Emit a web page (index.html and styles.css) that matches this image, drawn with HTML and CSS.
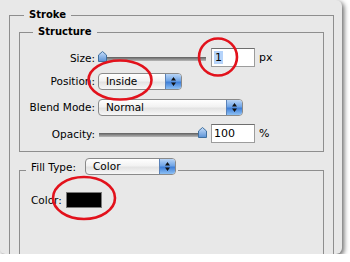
FILE: index.html
```html
<!DOCTYPE html>
<html lang="en">
<head>
    <meta charset="UTF-8">
    <title>Stroke</title>
    <link rel="stylesheet" href="styles.css">
</head>
<body>
    <div class="panel">
        <fieldset class="group stroke">
            <legend>Stroke</legend>

            <fieldset class="group structure">
                <legend>Structure</legend>

                <div class="row row-size">
                    <span class="label">Size:</span>
                    <div class="slider">
                        <svg class="thumb" width="9" height="11" viewBox="0 0 9 11"><defs><linearGradient id="tg1" x1="0" y1="0" x2="0" y2="1"><stop offset="0" stop-color="#c8defa"/><stop offset="1" stop-color="#5b92d6"/></linearGradient></defs><path d="M4.5 0.5 L8.5 4 L8.5 10.5 L0.5 10.5 L0.5 4 Z" fill="url(#tg1)" stroke="#40709f"/></svg>
                    </div>
                    <span class="field"><span class="selected">1</span></span>
                    <span class="unit">px</span>
                </div>

                <div class="row row-position">
                    <span class="label">Position:</span>
                    <span class="popup popup-position">
                        <span class="popup-text">Inside</span>
                        <span class="popup-arrows"><svg width="7" height="11" viewBox="0 0 7 11"><path d="M3.5 1 L6 4.5 L1 4.5 Z M3.5 10 L6 6.5 L1 6.5 Z" fill="#111"/></svg></span>
                    </span>
                </div>

                <div class="row row-blend">
                    <span class="label">Blend Mode:</span>
                    <span class="popup popup-blend">
                        <span class="popup-text">Normal</span>
                        <span class="popup-arrows"><svg width="7" height="11" viewBox="0 0 7 11"><path d="M3.5 1 L6 4.5 L1 4.5 Z M3.5 10 L6 6.5 L1 6.5 Z" fill="#111"/></svg></span>
                    </span>
                </div>

                <div class="row row-opacity">
                    <span class="label">Opacity:</span>
                    <div class="slider slider-full">
                        <svg class="thumb" width="9" height="11" viewBox="0 0 9 11"><defs><linearGradient id="tg2" x1="0" y1="0" x2="0" y2="1"><stop offset="0" stop-color="#c8defa"/><stop offset="1" stop-color="#5b92d6"/></linearGradient></defs><path d="M4.5 0.5 L8.5 4 L8.5 10.5 L0.5 10.5 L0.5 4 Z" fill="url(#tg2)" stroke="#40709f"/></svg>
                    </div>
                    <span class="field">100</span>
                    <span class="unit">%</span>
                </div>
            </fieldset>

            <fieldset class="group fill">
                <legend>
                    <span class="fill-head">
                        <span class="fill-label">Fill Type:</span>
                        <span class="popup popup-color">
                            <span class="popup-text">Color</span>
                            <span class="popup-arrows"><svg width="7" height="11" viewBox="0 0 7 11"><path d="M3.5 1 L6 4.5 L1 4.5 Z M3.5 10 L6 6.5 L1 6.5 Z" fill="#111"/></svg></span>
                        </span>
                    </span>
                </legend>

                <div class="color-row">
                    <span>Color:</span>
                    <span class="swatch"></span>
                </div>
            </fieldset>
        </fieldset>

        <!-- red markup drawn over the dialog -->
        <svg class="marks" width="350" height="262" viewBox="0 0 350 262">
            <ellipse cx="218" cy="57" rx="19" ry="18.5" />
            <ellipse cx="120" cy="80" rx="31.5" ry="19.5" />
            <ellipse cx="84" cy="198" rx="31" ry="21" />
        </svg>
    </div>
</body>
</html>
```

FILE: styles.css
```css
body {
    margin: 0;
    background: #fff;
    font-family: "DejaVu Sans", "Lucida Grande", sans-serif;
    font-size: 10.5px;
    color: #000;
}
.panel {
    position: relative;
    width: 342px;
    height: 254px;
    padding-top: 8px;
    box-sizing: border-box;
    background: #e8e8e8;
    border-radius: 0 6px 6px 5px;
    box-shadow: 2px 2px 5px rgba(0,0,0,0.6);
    overflow: hidden;
}
.group {
    margin: 0;
    padding: 0;
    border: 1px solid #8e8e8e;
    box-sizing: border-box;
    min-width: 0;
}
.group > legend {
    padding: 0 5px;
    line-height: 14px;
    font-weight: bold;
    font-size: 10px;
}
.stroke {
    margin-left: 9px;
    width: 325px;
    height: 320px;
}
.stroke > legend {
    margin-left: 14px;
}
.structure {
    margin: 3px 0 0 9px;
    width: 305px;
    padding: 9px 0 8px;
}
.structure > legend {
    margin-left: 13px;
}
.row {
    display: flex;
    align-items: center;
}
.label {
    width: 75px;
    margin-right: 3px;
    text-align: right;
}
.row-size { height: 19px; }
.row-position { height: 18px; margin-top: 5px; }
.row-blend { height: 18px; margin-top: 8px; }
.row-opacity { height: 19px; margin-top: 8px; }

.slider {
    width: 109px;
    height: 11px;
    margin-top: -2px;
    display: flex;
    justify-content: flex-start;
    background: linear-gradient(#5e5e5e, #8a8a8a 50%, #b8b8b8) no-repeat 1px 6px / 107px 4px;
    border-radius: 2px;
}
.slider-full {
    justify-content: flex-end;
}
.thumb {
    display: block;
}
.field {
    width: 44px;
    height: 19px;
    margin-left: 4px;
    box-sizing: border-box;
    border: 1px solid #9c9c9c;
    border-top-color: #6e6e6e;
    background: #fff;
    padding: 2px 0 0 2px;
    line-height: 13px;
    font-size: 11px;
}
.selected {
    background: #b5d3fa;
    padding: 0 1px;
}
.unit {
    margin-left: 4px;
    font-size: 11px;
}

.popup {
    display: inline-flex;
    height: 17px;
    box-sizing: border-box;
    border: 1px solid #8a8a8a;
    border-radius: 4px;
    background: linear-gradient(#ffffff, #f2f2f2 45%, #e3e3e3 55%, #f7f7f7);
    overflow: hidden;
    font-weight: normal;
    font-size: 10.5px;
}
.popup-text {
    flex: 1;
    padding-left: 7px;
    line-height: 15px;
}
.popup-arrows {
    width: 15px;
    display: flex;
    align-items: center;
    justify-content: center;
    border-left: 1px solid #5a82b8;
    background: linear-gradient(#b9d5f6, #6fa4e6 45%, #3f7fd8 55%, #8dc0f4);
}
.popup-position { width: 84px; }
.popup-blend { width: 145px; }
.popup-color { width: 91px; margin-left: 9px; }

.fill {
    margin: 6px 0 0 9px;
    width: 305px;
    height: 200px;
    padding: 10px 0 0;
}
.fill > legend {
    margin-left: 6px;
    padding: 0 2px 0 5px;
    font-weight: normal;
    font-size: 10.5px;
}
.fill-head {
    display: flex;
    align-items: center;
    height: 17px;
    padding-bottom: 7px;
}
.fill-label {
    line-height: 16px;
}
.color-row {
    display: flex;
    align-items: center;
    height: 16px;
    margin-left: 11px;
}
.swatch {
    width: 36px;
    height: 16px;
    margin-left: 4px;
    box-sizing: border-box;
    border: 1px solid #7a7a7a;
    background: #000;
}

.marks {
    position: absolute;
    top: 0;
    left: 0;
    pointer-events: none;
}
.marks ellipse {
    fill: none;
    stroke: #e2121c;
    stroke-width: 2.6;
}
```
